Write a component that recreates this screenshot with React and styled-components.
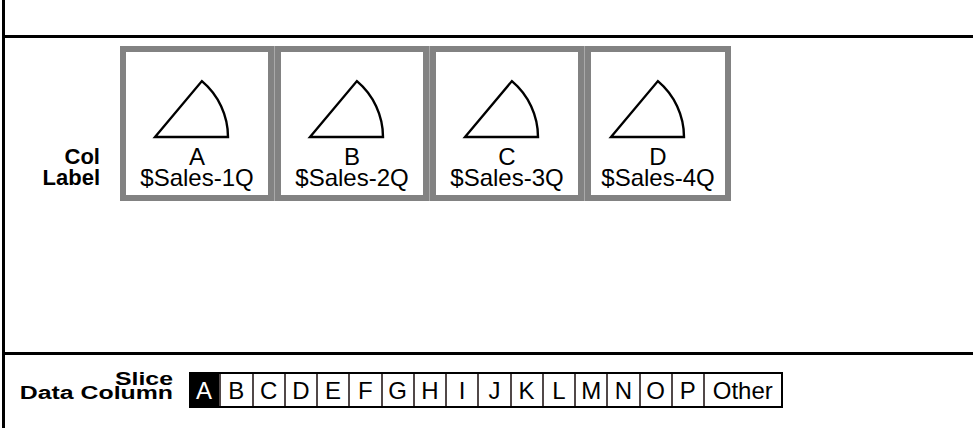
import React from 'react';
import styled, { createGlobalStyle } from 'styled-components';

const GlobalStyle = createGlobalStyle`
  html, body {
    margin: 0;
    padding: 0;
    background: #fff;
  }
  body {
    font-family: 'Liberation Sans', Arial, Helvetica, sans-serif;
    color: #000;
  }
`;

const Page = styled.div`
  margin-left: 2px;
  height: 428px;
  border-left: 3px solid #000;
  display: flex;
  flex-direction: column;
`;

const TopBar = styled.div`
  height: 35px;
  border-bottom: 3px solid #000;
`;

const ColumnsArea = styled.div`
  box-sizing: border-box;
  height: 317px;
  padding-top: 8px;
  border-bottom: 3px solid #000;
`;

const ColumnsRow = styled.div`
  display: flex;
  align-items: flex-end;
  gap: 20px;
`;

const RowLabel = styled.div`
  width: 95px;
  text-align: right;
  font-weight: bold;
  font-size: 22px;
  line-height: 21px;
  margin-bottom: 13px;
`;

const CardStrip = styled.div`
  display: inline-flex;
  gap: 1px;
  background: #a9a9a9;
`;

const Card = styled.div`
  width: ${(p) => p.$width}px;
  box-sizing: border-box;
  border: 6px solid #828282;
  background: #fff;
  padding-bottom: 7px;
  display: flex;
  flex-direction: column;
  align-items: center;
`;

const Wedge = styled.svg`
  display: block;
  width: 84px;
  height: 94px;
  margin-right: ${(p) => p.$shift}px;
`;

const CardText = styled.div`
  font-size: 24px;
  line-height: 21px;
  text-align: center;
  white-space: nowrap;
`;

const SliceArea = styled.div`
  padding-top: 17px;
`;

const SliceRow = styled.div`
  display: flex;
  align-items: flex-start;
  gap: 16px;
`;

const SliceLabel = styled.div`
  width: 168px;
  text-align: right;
  font-weight: bold;
  font-size: 18px;
  line-height: 14px;
  transform: scaleX(1.38);
  transform-origin: right center;
  white-space: nowrap;
`;

const Cells = styled.div`
  display: flex;
  height: 36px;
  box-sizing: border-box;
  border-top: 2px solid #000;
  border-bottom: 2px solid #000;
`;

const Cell = styled.div`
  width: ${(p) => (p.$wide ? 77.5 : 32.25)}px;
  box-sizing: border-box;
  border-right: 2px solid ${(p) => (p.$wide ? '#000' : '#514848')};
  background: ${(p) => (p.$active ? '#000' : '#fff')};
  color: ${(p) => (p.$active ? '#fff' : '#000')};
  font-size: 24px;
  line-height: 33px;
  text-align: center;
`;

const columns = [
  { letter: 'A', label: '$Sales-1Q', width: 154, shift: 6 },
  { letter: 'B', label: '$Sales-2Q', width: 154, shift: 6 },
  { letter: 'C', label: '$Sales-3Q', width: 154, shift: 6 },
  { letter: 'D', label: '$Sales-4Q', width: 146, shift: 16 },
];

const slices = 'ABCDEFGHIJKLMNOP'.split('');

const PieWedge = ({ shift }) => (
  <Wedge $shift={shift} viewBox="0 0 84 94">
    <path
      d="M3 85 L76 85 A73 73 0 0 0 49.9 29.1 Z"
      fill="none"
      stroke="#000"
      strokeWidth="2.4"
      strokeLinejoin="miter"
    />
  </Wedge>
);

const App = () => (
  <>
    <GlobalStyle />
    <Page>
      <TopBar />
      <ColumnsArea>
        <ColumnsRow>
          <RowLabel>
            Col
            <br />
            Label
          </RowLabel>
          <CardStrip>
            {columns.map((c) => (
              <Card key={c.letter} $width={c.width}>
                <PieWedge shift={c.shift} />
                <CardText>{c.letter}</CardText>
                <CardText>{c.label}</CardText>
              </Card>
            ))}
          </CardStrip>
        </ColumnsRow>
      </ColumnsArea>
      <SliceArea>
        <SliceRow>
          <SliceLabel>
            Slice
            <br />
            Data Column
          </SliceLabel>
          <Cells>
            {slices.map((s) => (
              <Cell key={s} $active={s === 'A'}>{s}</Cell>
            ))}
            <Cell $wide>Other</Cell>
          </Cells>
        </SliceRow>
      </SliceArea>
    </Page>
  </>
);

export default App;
